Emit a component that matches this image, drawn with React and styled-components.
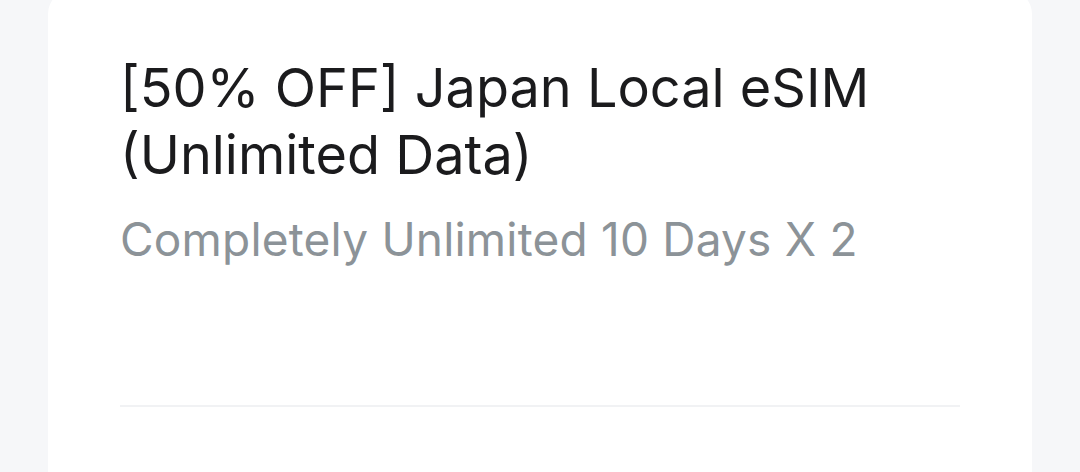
import styled, { createGlobalStyle } from "styled-components";

const GlobalStyle = createGlobalStyle`
  html, body {
    margin: 0;
    padding: 0;
    background: #f6f7f9;
  }
`

const Page = styled.div`
  height: 472px;
  padding: 0 48px;
  overflow: hidden;
`
const Card = styled.div`
  margin-top: -10px;
  height: 640px;
  background: #ffffff;
  border-radius: 24px;
  padding: 64px 72px 0;
  box-sizing: border-box;
`
const Title = styled.h1`
  margin: 0;
  font-family: "Inter", "Noto Sans", sans-serif;
  font-weight: 400;
  font-size: 54px;
  line-height: 67px;
  color: #1b1b1d;
`
const Subtitle = styled.p`
  margin: 23px 0 0;
  font-family: "Inter", "Noto Sans", sans-serif;
  font-size: 46px;
  line-height: 56px;
  letter-spacing: 0.2px;
  color: #8c9398;
`
const Divider = styled.hr`
  margin: 138px 0 0;
  border: 0;
  height: 2px;
  background: #f1f2f4;
`

const ProductHeader = () => {
  return (
    <Page>
      <GlobalStyle />
      <Card>
        <Title>[50% OFF] Japan Local eSIM<br />(Unlimited Data)</Title>
        <Subtitle>Completely Unlimited 10 Days X 2</Subtitle>
        <Divider />
      </Card>
    </Page>
  )
}

export default ProductHeader
